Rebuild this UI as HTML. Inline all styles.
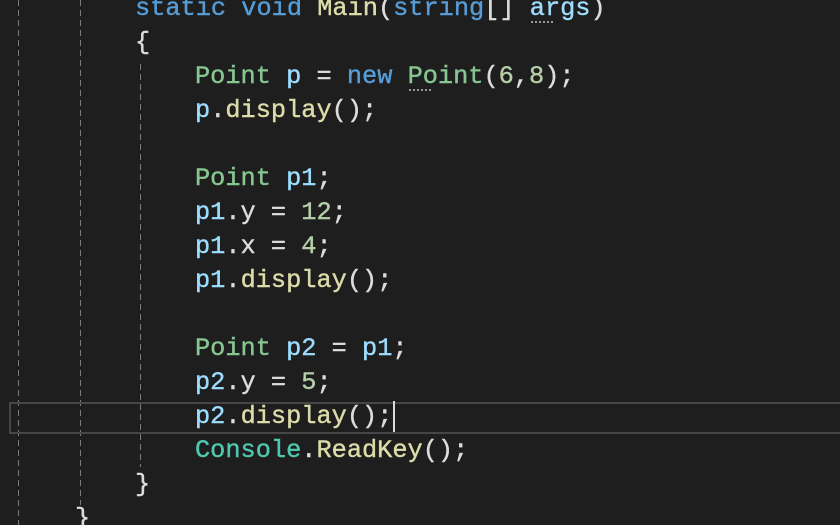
<!DOCTYPE html>
<html><head><style>
html,body{margin:0;padding:0;background:#1e1e1e;width:840px;height:525px;overflow:hidden;position:relative}
.l{position:absolute;white-space:pre;font-family:"Liberation Mono",monospace;font-size:25.3px;line-height:34px;color:#dcdcdc;height:34px;-webkit-text-stroke:0.4px currentColor}
.k{color:#569cd6}.t{color:#86c691}.c{color:#4ec9b0}.m{color:#dcdcaa}.v{color:#9cdcfe}.n{color:#b5cea8}
.g{position:absolute;width:1px;background:repeating-linear-gradient(to bottom,#7a7a7a 0 6px,transparent 6px 10px)}
.cur{position:absolute;left:9px;top:402px;width:840px;height:28px;border:2px solid #464646;border-right:none}
.dots{position:absolute;height:3px;border-top:2px dotted #999}
</style></head><body>
<div class="g" style="left:18px;top:0;height:525px"></div>
<div class="g" style="left:80px;top:0;height:505px"></div>
<div class="g" style="left:140px;top:64px;height:403px"></div>
<div class="cur"></div>
<div class="l" style="left:135px;top:-8px"><span class="k">static</span> <span class="k">void</span> <span class="m">Main</span>(<span class="k">string</span>[] <span class="v">args</span>)</div>
<div class="dots" style="left:531px;top:21px;width:22px"></div>
<div class="l" style="left:135px;top:26px">{</div>
<div class="l" style="left:195px;top:60px"><span class="t">Point</span> <span class="v">p</span> = <span class="k">new</span> <span class="t">Point</span>(<span class="n">6</span>,<span class="n">8</span>);</div>
<div class="dots" style="left:409px;top:89px;width:22px"></div>
<div class="l" style="left:195px;top:94px"><span class="v">p</span>.<span class="m">display</span>();</div>
<div class="l" style="left:195px;top:162px"><span class="t">Point</span> <span class="v">p1</span>;</div>
<div class="l" style="left:195px;top:196px"><span class="v">p1</span>.y = <span class="n">12</span>;</div>
<div class="l" style="left:195px;top:230px"><span class="v">p1</span>.x = <span class="n">4</span>;</div>
<div class="l" style="left:195px;top:264px"><span class="v">p1</span>.<span class="m">display</span>();</div>
<div class="l" style="left:195px;top:332px"><span class="t">Point</span> <span class="v">p2</span> = <span class="v">p1</span>;</div>
<div class="l" style="left:195px;top:366px"><span class="v">p2</span>.y = <span class="n">5</span>;</div>
<div class="l" style="left:195px;top:400px"><span class="v">p2</span>.<span class="m">display</span>();</div>
<div style="position:absolute;left:393px;top:401px;width:2px;height:31px;background:#dcdcdc"></div>
<div class="l" style="left:195px;top:434px"><span class="c">Console</span>.<span class="m">ReadKey</span>();</div>
<div class="l" style="left:135px;top:468px">}</div>
<div class="l" style="left:75px;top:502px">}</div>
</body></html>
